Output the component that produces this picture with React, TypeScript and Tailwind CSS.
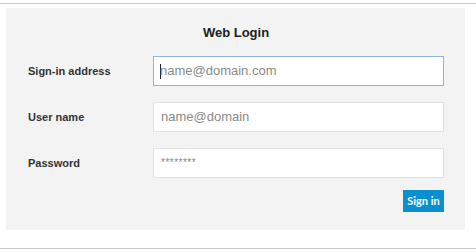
const FIELDS = [
  { label: "Sign-in address", placeholder: "name@domain.com", type: "text", focus: true },
  { label: "User name", placeholder: "name@domain", type: "text", focus: false },
  { label: "Password", placeholder: "********", type: "password", focus: false },
];

export default function App() {
  return (
    <div className="h-[252px] w-[476px] bg-white pt-[3px] font-['Liberation_Sans',Arial,sans-serif]">
      <div className="h-px bg-[#c8c8c8]" />
      <div className="ml-[6px] mt-[4px] h-[222px] w-[459px] bg-[#f3f3f3] pl-[22px] pr-[21px] pt-[17px]">
        <div className="text-center text-[13px] font-bold leading-[16px] text-[#222]">Web Login</div>

        <div className="mt-[15px] flex flex-col gap-[16px]">
          {FIELDS.map((f) => (
            <div key={f.label} className="flex items-center">
              <label className="w-[125px] text-[11px] font-bold text-[#333]">{f.label}</label>
              <div
                className={
                  f.focus
                    ? "flex h-[30px] flex-1 items-center border border-[#8fb2e0] bg-white pl-[6px]"
                    : "flex h-[30px] flex-1 items-center border border-[#e2e2e2] bg-white pl-[7px]"
                }
              >
                {f.focus && <span className="mr-[-1px] h-[15px] w-px bg-[#222]" />}
                <span
                  className={
                    f.type === "password"
                      ? "text-[10px] leading-none tracking-[0.5px] text-[#888]"
                      : "text-[13px] text-[#8a8a8a]"
                  }
                >
                  {f.placeholder}
                </span>
              </div>
            </div>
          ))}
        </div>

        <div className="mt-[12px] flex justify-end">
          <button className="h-[22px] w-[41px] bg-[#0a8fd0] font-['Lato','Open_Sans',sans-serif] text-[11px] font-bold text-white">
            Sign in
          </button>
        </div>
      </div>
      <div className="mt-[18px] h-px bg-[#c8c8c8]" />
    </div>
  );
}
